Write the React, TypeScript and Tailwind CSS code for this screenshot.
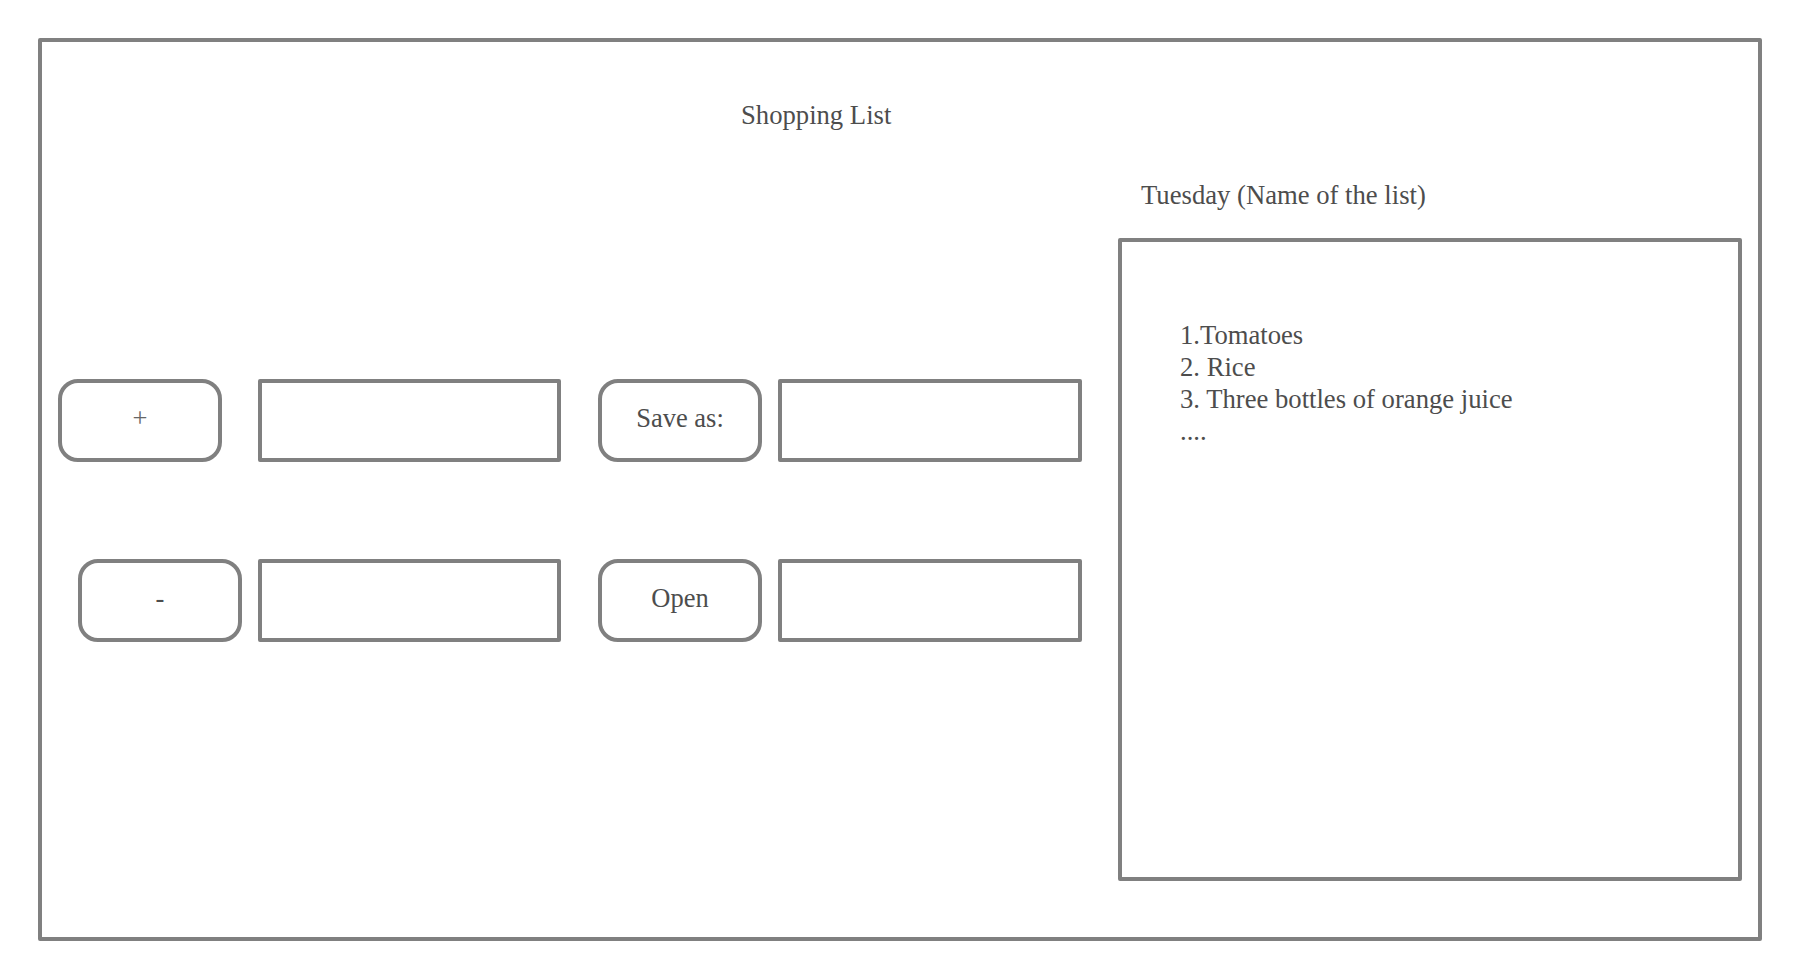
const serif = { fontFamily: '"Liberation Serif", "Times New Roman", serif' };

const items = ['1.Tomatoes', '2. Rice', '3. Three bottles of orange juice', '....'];

const ActionButton = ({ label, className = '' }: { label: string; className?: string }) => (
    <button
        className={`w-[164px] h-[83px] shrink-0 border-4 border-[#808080] rounded-[20px] bg-white flex items-center justify-center pb-[4px] text-[26.5px] leading-none text-[#4d4d4d] ${className}`}
    >
        {label}
    </button>
);

const Field = ({ className = '' }: { className?: string }) => (
    <div className={`h-[83px] shrink-0 border-4 border-[#808080] rounded-[2px] bg-white ${className}`} />
);

export default function App() {
    return (
        <div className="w-[1800px] h-[980px] bg-white p-[38px]" style={serif}>
            <div className="w-[1724px] h-[903px] border-4 border-[#808080] rounded-[2px] flex">
                {/* Left: title and controls */}
                <div className="w-[1076px] shrink-0 flex flex-col">
                    <h1 className="pt-[60px] pl-[699px] text-[26.67px] leading-none text-[#4d4d4d] font-normal">
                        Shopping List
                    </h1>

                    <div className="mt-[250px] pl-[16px] flex items-center">
                        <ActionButton label="+" className="font-light text-[#666]" />
                        <Field className="ml-[36px] w-[303px]" />
                        <ActionButton label="Save as:" className="ml-[37px]" />
                        <Field className="ml-[16px] w-[304px]" />
                    </div>

                    <div className="mt-[97px] pl-[36px] flex items-center">
                        <ActionButton label="-" />
                        <Field className="ml-[16px] w-[303px]" />
                        <ActionButton label="Open" className="ml-[37px]" />
                        <Field className="ml-[16px] w-[304px]" />
                    </div>
                </div>

                {/* Right: saved list */}
                <div className="pt-[140px] flex flex-col">
                    <h2 className="pl-[23px] text-[26.67px] leading-none text-[#4d4d4d] font-normal">
                        Tuesday (Name of the list)
                    </h2>
                    <div className="mt-[29px] w-[624px] h-[643px] border-4 border-[#808080] rounded-[2px] pt-[77px] pl-[58px]">
                        <ul className="text-[26.67px] leading-[32px] text-[#4d4d4d]">
                            {items.map(item => (
                                <li key={item}>{item}</li>
                            ))}
                        </ul>
                    </div>
                </div>
            </div>
        </div>
    );
}
